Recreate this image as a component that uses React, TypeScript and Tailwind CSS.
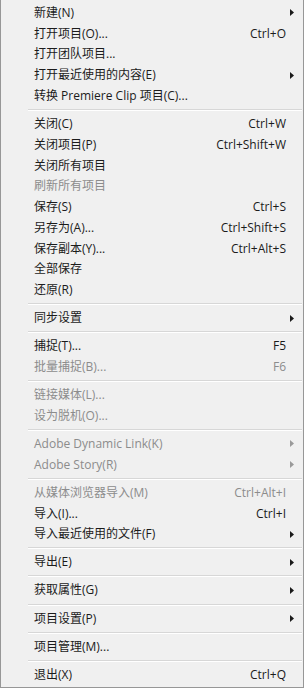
type Item = {
  label: string;
  shortcut?: string;
  sub?: boolean;
  disabled?: boolean;
};

const sections: Item[][] = [
  [
    { label: "新建(N)", sub: true },
    { label: "打开项目(O)...", shortcut: "Ctrl+O" },
    { label: "打开团队项目..." },
    { label: "打开最近使用的内容(E)", sub: true },
    { label: "转换 Premiere Clip 项目(C)..." },
  ],
  [
    { label: "关闭(C)", shortcut: "Ctrl+W" },
    { label: "关闭项目(P)", shortcut: "Ctrl+Shift+W" },
    { label: "关闭所有项目" },
    { label: "刷新所有项目", disabled: true },
    { label: "保存(S)", shortcut: "Ctrl+S" },
    { label: "另存为(A)...", shortcut: "Ctrl+Shift+S" },
    { label: "保存副本(Y)...", shortcut: "Ctrl+Alt+S" },
    { label: "全部保存" },
    { label: "还原(R)" },
  ],
  [{ label: "同步设置", sub: true }],
  [
    { label: "捕捉(T)...", shortcut: "F5" },
    { label: "批量捕捉(B)...", shortcut: "F6", disabled: true },
  ],
  [
    { label: "链接媒体(L)...", disabled: true },
    { label: "设为脱机(O)...", disabled: true },
  ],
  [
    { label: "Adobe Dynamic Link(K)", sub: true, disabled: true },
    { label: "Adobe Story(R)", sub: true, disabled: true },
  ],
  [
    { label: "从媒体浏览器导入(M)", shortcut: "Ctrl+Alt+I", disabled: true },
    { label: "导入(I)...", shortcut: "Ctrl+I" },
    { label: "导入最近使用的文件(F)", sub: true },
  ],
  [{ label: "导出(E)", sub: true }],
  [{ label: "获取属性(G)", sub: true }],
  [{ label: "项目设置(P)", sub: true }],
  [{ label: "项目管理(M)..." }],
  [{ label: "退出(X)", shortcut: "Ctrl+Q" }],
];

function Arrow({ disabled }: { disabled?: boolean }) {
  return (
    <svg width="4" height="7" viewBox="0 0 4 7" className={disabled ? "fill-[#9a9a9a]" : "fill-[#1a1a1a]"}>
      <path d="M0 0 L4 3.5 L0 7 Z" />
    </svg>
  );
}

function Row({ item }: { item: Item }) {
  return (
    <div
      className={
        "flex h-[20.75px] items-center pl-[33px] pr-[17px] text-[12px] leading-none " +
        (item.disabled ? "text-[#8c8c8c]" : "text-[#1b1b1b]")
      }
    >
      <span className="flex-1 whitespace-nowrap">{item.label}</span>
      {item.shortcut && <span className="whitespace-nowrap">{item.shortcut}</span>}
      {item.sub && (
        <span className="mr-[-8px] flex w-[20px] justify-end">
          <Arrow disabled={item.disabled} />
        </span>
      )}
    </div>
  );
}

export default function App() {
  return (
    <div
      className="h-[689px] w-[306px] bg-white"
      style={{ fontFamily: '"Open Sans", "Noto Sans CJK SC", sans-serif' }}
    >
      <div className="h-[688px] w-[304px] border-b border-l border-r border-[#979797] bg-[#f0f0f0] pt-[2.6px]">
        {sections.map((section, i) => (
          <div key={i}>
            {i > 0 && (
              <div className="flex h-[7.35px] flex-col justify-center pl-[27px] pr-[1px]">
                <div className="h-px bg-[#d7d7d7]" />
                <div className="h-px bg-white" />
              </div>
            )}
            {section.map((item) => (
              <Row key={item.label} item={item} />
            ))}
          </div>
        ))}
      </div>
    </div>
  );
}
